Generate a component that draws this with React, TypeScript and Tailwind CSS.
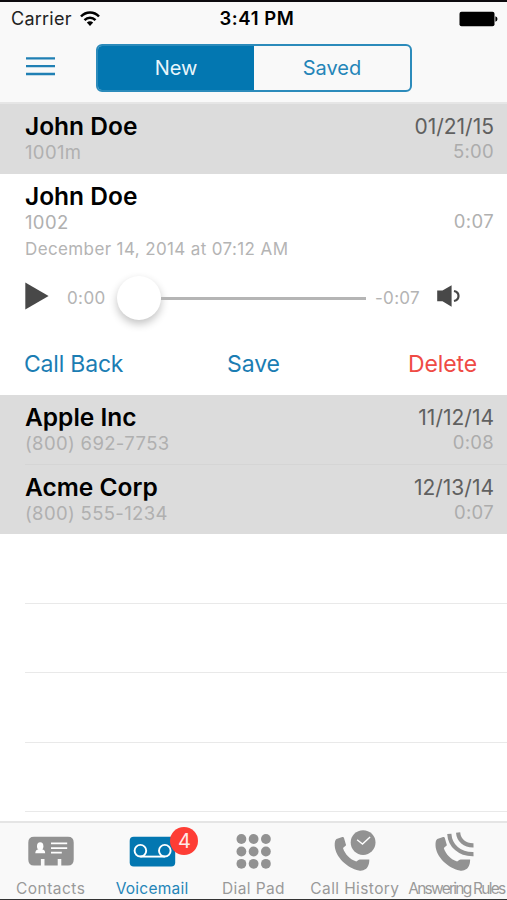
import { useState } from 'react';
import { clsx } from 'clsx';

interface Voicemail {
  name: string;
  number: string;
  date: string;
  duration: string;
}

const olderMessages: Voicemail[] = [
  { name: 'Apple Inc', number: '(800) 692-7753', date: '11/12/14', duration: '0:08' },
  { name: 'Acme Corp', number: '(800) 555-1234', date: '12/13/14', duration: '0:07' },
];

const PHONE_PATH =
  'M9.8 13 L15.6 11 Q17 10.6 17.3 12 L19.4 19.3 L16.3 22 C18 28 23.5 33.6 29.6 35.4 L31.8 33.9 Q32.2 33.6 33 33.6 L42.6 33.4 C42.8 37.5 41.2 41.6 39 43 Q35.8 45.3 32.2 44.5 C20.5 42.2 8.6 31 8 19.5 Q7.8 14.4 9.8 13 Z';

function StatusBar() {
  return (
    <div className="grid h-[33px] grid-cols-3 items-center pl-[11px] pr-[9px] text-[18px] text-[#222]">
      <div className="flex items-center gap-[8px]">
        <span className="tracking-[0.25px]">Carrier</span>
        <svg width="20" height="16" viewBox="0 0 20 16" fill="none" stroke="#000" strokeWidth="2.5">
          <path d="M1 5.5 C6 0.2 14 0.2 19 5.5" />
          <path d="M4.5 9.1 C7.6 6 12.4 6 15.5 9.1" />
          <path d="M10 15 L6.8 11.6 Q10 8.8 13.2 11.6 Z" fill="#000" stroke="none" />
        </svg>
      </div>
      <span className="pl-[5px] text-center text-[18.5px] font-semibold tracking-[0.6px] whitespace-nowrap text-black">
        3:41 PM
      </span>
      <svg className="justify-self-end" width="39" height="16" viewBox="0 0 39 16">
        <rect x="0.5" y="0.7" width="35" height="14.6" rx="2" fill="#000" />
        <path d="M36.4 5.2 Q38.5 6 38.5 8 Q38.5 10 36.4 10.8 Z" fill="#000" />
      </svg>
    </div>
  );
}

// Closed row, shown on grey
function MessageRow({ name, number, date, duration }: Voicemail) {
  return (
    <div className="flex flex-1 justify-between pt-[8px] pr-[13px] pl-[25px]">
      <div>
        <p className="text-[24.5px] leading-[28px] font-semibold text-black">{name}</p>
        <p className="text-[18.5px] leading-[24px] tracking-[0.35px] text-[#b0b0b0]">{number}</p>
      </div>
      <div className="pt-px text-right">
        <p className="text-[21px] leading-[28px] text-[#606060]">{date}</p>
        <p className="text-[18.5px] leading-[21px] tracking-[0.3px] text-[#acacac]">{duration}</p>
      </div>
    </div>
  );
}

function ContactsIcon() {
  return (
    <svg width="60" height="48" viewBox="21 826 60 48" fill="#929292">
      <path d="M34 836.7 H68 Q73.7 836.7 73.7 842.5 V859.5 Q73.7 865.5 68 865.5 H61.3 V859 H57.7 V865.5 H44.5 V859 H40.9 V865.5 H34 Q28.3 865.5 28.3 859.5 V842.5 Q28.3 836.7 34 836.7 Z" />
      <g fill="#fff">
        <ellipse cx="40.2" cy="846.2" rx="3.2" ry="3.9" />
        <path d="M35.3 853.3 Q35.3 849.8 38.5 849.2 H42 Q45.2 849.8 45.2 853.3 Z" />
        <path d="M51 842.5 H67.2 V844.3 H51 Z M51 847.2 H67.2 V849 H51 Z M51 851.8 H61.8 V853.6 H51 Z" />
      </g>
    </svg>
  );
}

function VoicemailIcon() {
  return (
    <svg width="60" height="48" viewBox="122 826 60 48" fill="none">
      <rect x="129.7" y="836.8" width="45.5" height="29.6" rx="4" fill="#0377b1" />
      <g stroke="#fff" strokeWidth="1.9">
        <circle cx="140.4" cy="850.7" r="5.8" />
        <circle cx="164.8" cy="850.7" r="5.8" />
        <path d="M140.4 856.6 H164.8" />
      </g>
    </svg>
  );
}

function DialPadIcon() {
  return (
    <svg width="60" height="48" viewBox="222.9 826 60 48" fill="#929292">
      {[839, 851.5, 863.8].map((cy) =>
        [241.3, 253.5, 265.8].map((cx) => <circle key={`${cx}-${cy}`} cx={cx} cy={cy} r="4.9" />)
      )}
    </svg>
  );
}

function CallHistoryIcon() {
  return (
    <svg width="60" height="48" viewBox="-1.7 0 60 48" fill="none">
      <path d={PHONE_PATH} fill="#929292" />
      <circle cx="36.4" cy="16.6" r="12.4" fill="#929292" />
      <path d="M30.4 13.8 L35.8 18 L43.4 10.9" stroke="#fff" strokeWidth="1.4" />
    </svg>
  );
}

function AnsweringRulesIcon() {
  return (
    <svg width="60" height="48" viewBox="-1.5 0 60 48" fill="none">
      <path d={PHONE_PATH} fill="#929292" />
      <g stroke="#929292" strokeWidth="4.2">
        <path d="M21.8 7.8 C22.5 19.5 32 28.6 46 28.2" />
        <path d="M30.6 6.5 C31.2 14 37 19.6 46 19.4" />
      </g>
    </svg>
  );
}

const tabs = [
  { label: 'Contacts', Icon: ContactsIcon, spacing: 'tracking-[0.45px]' },
  { label: 'Voicemail', Icon: VoicemailIcon, spacing: 'tracking-[0.25px]', badge: 4 },
  { label: 'Dial Pad', Icon: DialPadIcon, spacing: 'tracking-[0.4px]' },
  { label: 'Call History', Icon: CallHistoryIcon, spacing: 'tracking-[0.4px]' },
  { label: 'Answering Rules', Icon: AnsweringRulesIcon, spacing: 'tracking-[-1.75px]' },
];

export default function App() {
  const [folder, setFolder] = useState('New');
  const [activeTab, setActiveTab] = useState('Voicemail');

  return (
    <div className="flex h-[900px] w-[507px] flex-col overflow-hidden border-t-2 border-b border-t-[#0d0b0f] border-b-[#333] bg-white font-['Inter',sans-serif]">
      {/* Header */}
      <header className="h-[102px] shrink-0 border-b-2 border-[#e6e6e6] bg-[#f9f9f9]">
        <StatusBar />
        <div className="flex items-start pt-[9px] pl-[26px]">
          <svg className="mt-[12px] mr-[41px]" width="29" height="22" viewBox="0 0 29 22" stroke="#2080b4" strokeWidth="2.3">
            <path d="M0 2.3 H29 M0 10.1 H29 M0 18 H29" />
          </svg>
          <div className="grid h-[48px] w-[316px] grid-cols-2 overflow-hidden rounded-[6px] border-2 border-[#2c8bbb]">
            {['New', 'Saved'].map((item) => (
              <button
                key={item}
                onClick={() => setFolder(item)}
                className={clsx(
                  'text-[20px]',
                  folder === item ? 'bg-[#0377b1] text-[#e8f5fb]' : 'text-[#2485b8]'
                )}
              >
                {item}
              </button>
            ))}
          </div>
        </div>
      </header>

      {/* Messages */}
      <main className="flex min-h-0 flex-1 flex-col">
        <div className="flex h-[70px] shrink-0 bg-[#dcdcdc]">
          <MessageRow name="John Doe" number="1001m" date="01/21/15" duration="5:00" />
        </div>

        {/* Open message with player */}
        <section className="h-[221px] shrink-0 pt-[8px] pr-[13px] pl-[25px]">
          <p className="text-[24.5px] leading-[28px] font-semibold text-black">John Doe</p>
          <div className="flex justify-between text-[18.5px] leading-[24px] tracking-[0.35px] text-[#b0b0b0]">
            <span>1002</span>
            <span className="-mt-px">0:07</span>
          </div>
          <p className="mt-[4px] text-[17px] leading-[22px] tracking-[0.38px] text-[#b4b4b4]">
            December 14, 2014 at 07:12 AM
          </p>

          <div className="mt-[14px] flex h-[48px] items-center text-[17px] text-[#b4b4b4]">
            <svg className="mb-[5px] shrink-0" width="24" height="28" viewBox="0 0 24 28">
              <path d="M0.3 0.4 L23.6 14 L0.3 27.6 Z" fill="#484848" />
            </svg>
            <span className="ml-[18px] w-[50px] pt-px tracking-[0.4px]">0:00</span>
            <div className="flex w-[249px] items-center">
              <span className="h-[44px] w-[44px] shrink-0 rounded-full bg-white shadow-[0_4px_9px_rgba(0,0,0,0.24)]" />
              <span className="h-[3px] flex-1 bg-[#b5b5b5]" />
            </div>
            <span className="ml-[9px] w-[62px] pt-px tracking-[0.3px]">-0:07</span>
            <svg className="mb-[4px] shrink-0" width="23" height="22" viewBox="0 0 23 22" fill="none">
              <path d="M0.2 5.5 H5.5 L14.6 0.2 V21.8 L5.5 16.3 H0.2 Z" fill="#484848" />
              <path d="M17 6 Q21.5 7 21.5 11 Q21.5 15 17 16" stroke="#484848" strokeWidth="2.2" />
            </svg>
          </div>

          <div className="mt-[26px] mr-[17px] -ml-px grid grid-cols-3 text-[23px] leading-[32px] tracking-[-0.1px] text-[#1b7db3]">
            <button className="justify-self-start tracking-[-0.2px]">Call Back</button>
            <button className="justify-self-center pl-[6px]">Save</button>
            <button className="justify-self-end text-[#ef4b45]">Delete</button>
          </div>
        </section>

        <div className="flex shrink-0 flex-col bg-[#dcdcdc]">
          {olderMessages.map((message, i) => (
            <div key={message.name} className="flex h-[69.5px] flex-col">
              <MessageRow {...message} />
              {i === 0 && <div className="ml-[25px] h-px bg-[#d5d5d5]" />}
            </div>
          ))}
        </div>

        {/* Empty rows */}
        <div className="min-h-0 flex-1 overflow-hidden">
          {[1, 2, 3, 4].map((row) => (
            <div key={row} className="ml-[25px] h-[69.6px] border-b-[1.5px] border-[#e9e9e9]" />
          ))}
        </div>
      </main>

      {/* Tab bar */}
      <nav className="grid h-[78px] shrink-0 grid-cols-5 border-t-2 border-[#e5e5e5] bg-[#f9f9f9]">
        {tabs.map(({ label, Icon, spacing, badge }) => (
          <button
            key={label}
            onClick={() => setActiveTab(label)}
            className="relative flex min-w-0 flex-col items-center pt-[3px]"
          >
            <Icon />
            <span
              className={clsx(
                'mt-[5px] text-[15.5px] leading-[20px] whitespace-nowrap',
                spacing,
                activeTab === label ? 'text-[#2485b8]' : 'text-[#999]'
              )}
            >
              {label}
            </span>
            {badge && (
              <span className="absolute top-[4px] left-[69px] flex h-[28px] w-[28px] items-center justify-center rounded-full bg-[#fe3d35] text-[20px] text-[#ffe9e6]">
                {badge}
              </span>
            )}
          </button>
        ))}
      </nav>
    </div>
  );
}
